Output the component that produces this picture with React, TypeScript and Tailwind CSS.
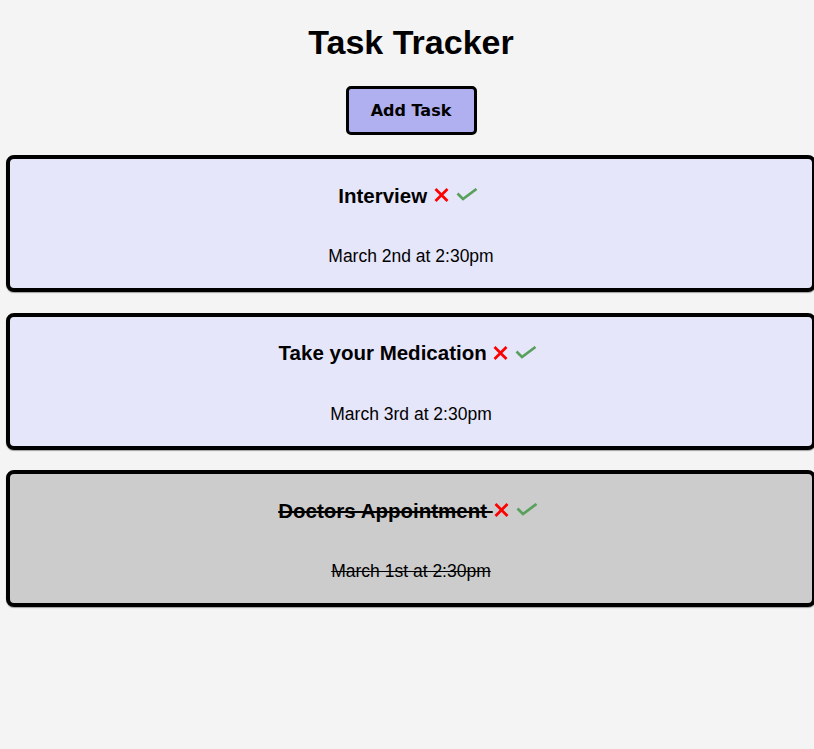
const tasks = [
  { id: 1, text: "Interview", day: "March 2nd at 2:30pm", done: false },
  { id: 2, text: "Take your Medication", day: "March 3rd at 2:30pm", done: false },
  { id: 3, text: "Doctors Appointment", day: "March 1st at 2:30pm", done: true },
];

function XIcon() {
  return (
    <svg width="15" height="14" viewBox="0 0 15 14" className="block">
      <path d="M1.5 1 L13.5 13 M13.5 1 L1.5 13" stroke="#ff0000" strokeWidth="2.7" fill="none" />
    </svg>
  );
}

function CheckIcon() {
  return (
    <svg width="22" height="13" viewBox="0 0 22 13" className="block">
      <path d="M1.5 5.5 L7 11 L20.5 1" stroke="#58a05b" strokeWidth="2.7" fill="none" />
    </svg>
  );
}

export default function App() {
  return (
    <div className="min-h-[749px] overflow-hidden bg-[#f4f4f4] font-['Liberation_Sans',Arial,sans-serif] text-black">
      <div className="w-[822px] pb-10">
        <h1 className="pt-[22px] text-center text-[34px] font-bold leading-[40px]">Task Tracker</h1>
        <div className="mt-[24px] flex justify-center">
          <button className="h-[49px] w-[131px] rounded-[5px] border-[3px] border-black bg-[#b0b0f0] font-['DejaVu_Sans',Verdana,sans-serif] text-[16px] font-bold">
            Add Task
          </button>
        </div>
        <div className="mt-5 flex flex-col gap-[20.5px] px-[6px]">
          {tasks.map((t) => (
            <div
              key={t.id}
              className={
                t.done
                  ? "h-[137px] rounded-[8px] border-4 border-black bg-[#cccccc] shadow-[0_1px_1px_rgba(0,0,0,0.35)]"
                  : "h-[137px] rounded-[8px] border-4 border-black bg-[#e6e6fa] shadow-[0_1px_1px_rgba(0,0,0,0.35)]"
              }
            >
              <div className="mt-[25px] flex h-6 items-center justify-center pr-[6px] text-[20.5px] font-bold">
                <span className={t.done ? "whitespace-pre line-through" : "whitespace-pre"}>{t.text + " "}</span>
                <span className="mb-[2px] ml-[1px]">
                  <XIcon />
                </span>
                <span className="mb-[3px] ml-[7px]">
                  <CheckIcon />
                </span>
              </div>
              <p className={t.done ? "mt-[38px] text-center text-[17.5px] leading-5 line-through" : "mt-[38px] text-center text-[17.5px] leading-5"}>
                {t.day}
              </p>
            </div>
          ))}
        </div>
      </div>
    </div>
  );
}
